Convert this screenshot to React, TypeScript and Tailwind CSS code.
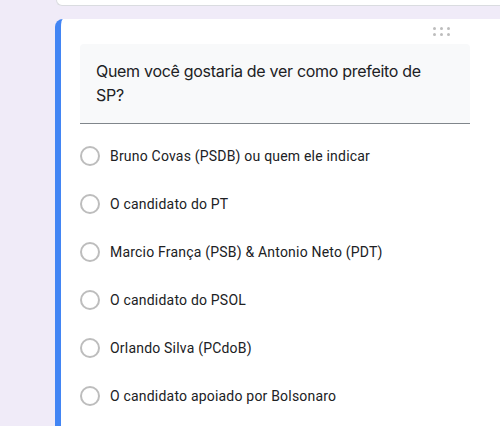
const options = [
  'Bruno Covas (PSDB) ou quem ele indicar',
  'O candidato do PT',
  'Marcio França (PSB) & Antonio Neto (PDT)',
  'O candidato do PSOL',
  'Orlando Silva (PCdoB)',
  'O candidato apoiado por Bolsonaro',
];

function DragHandle() {
  return (
    <div className="grid grid-cols-3 gap-x-[4px] gap-y-[3px]">
      {Array.from({ length: 6 }).map((_, i) => (
        <span key={i} className="block w-[3px] h-[3px] rounded-full bg-[#bdbdbd]" />
      ))}
    </div>
  );
}

export default function App() {
  return (
    <div className="w-[500px] h-[426px] overflow-hidden bg-[#f0ebf8] font-['Roboto',sans-serif]">
      {/* previous card, mostly scrolled out */}
      <div className="ml-[56px] w-[700px] h-[6px] bg-white rounded-b-lg border-b border-l border-[#dadce0]" />

      {/* question card */}
      <div className="mt-[13px] ml-[55px] w-[700px] h-[420px] bg-white rounded-lg border-l-[6px] border-[#4285f4]">
        <div className="ml-[19px] w-[390px]">
          <div className="h-[25px] flex justify-end items-start pt-[8px] pr-[20px]">
            <DragHandle />
          </div>
          <div className="bg-[#f8f9fa] rounded-t border-b border-[#80868b] pt-[15px] pb-[16px] px-4 text-[16px] leading-6 tracking-[-0.3px] text-[#202124] font-['Inter',sans-serif] whitespace-nowrap">
            Quem você gostaria de ver como prefeito de
            <br />
            SP?
          </div>
        </div>

        <div className="mt-[8px] ml-[19px] flex flex-col">
          {options.map((opt) => (
            <label key={opt} className="h-12 flex items-center gap-[10px] cursor-pointer">
              <span className="w-5 h-5 rounded-full border-2 border-[#bdbdbd] shrink-0" />
              <span className="text-[14px] tracking-[0.2px] text-[#202124]">{opt}</span>
            </label>
          ))}
        </div>
      </div>
    </div>
  );
}
